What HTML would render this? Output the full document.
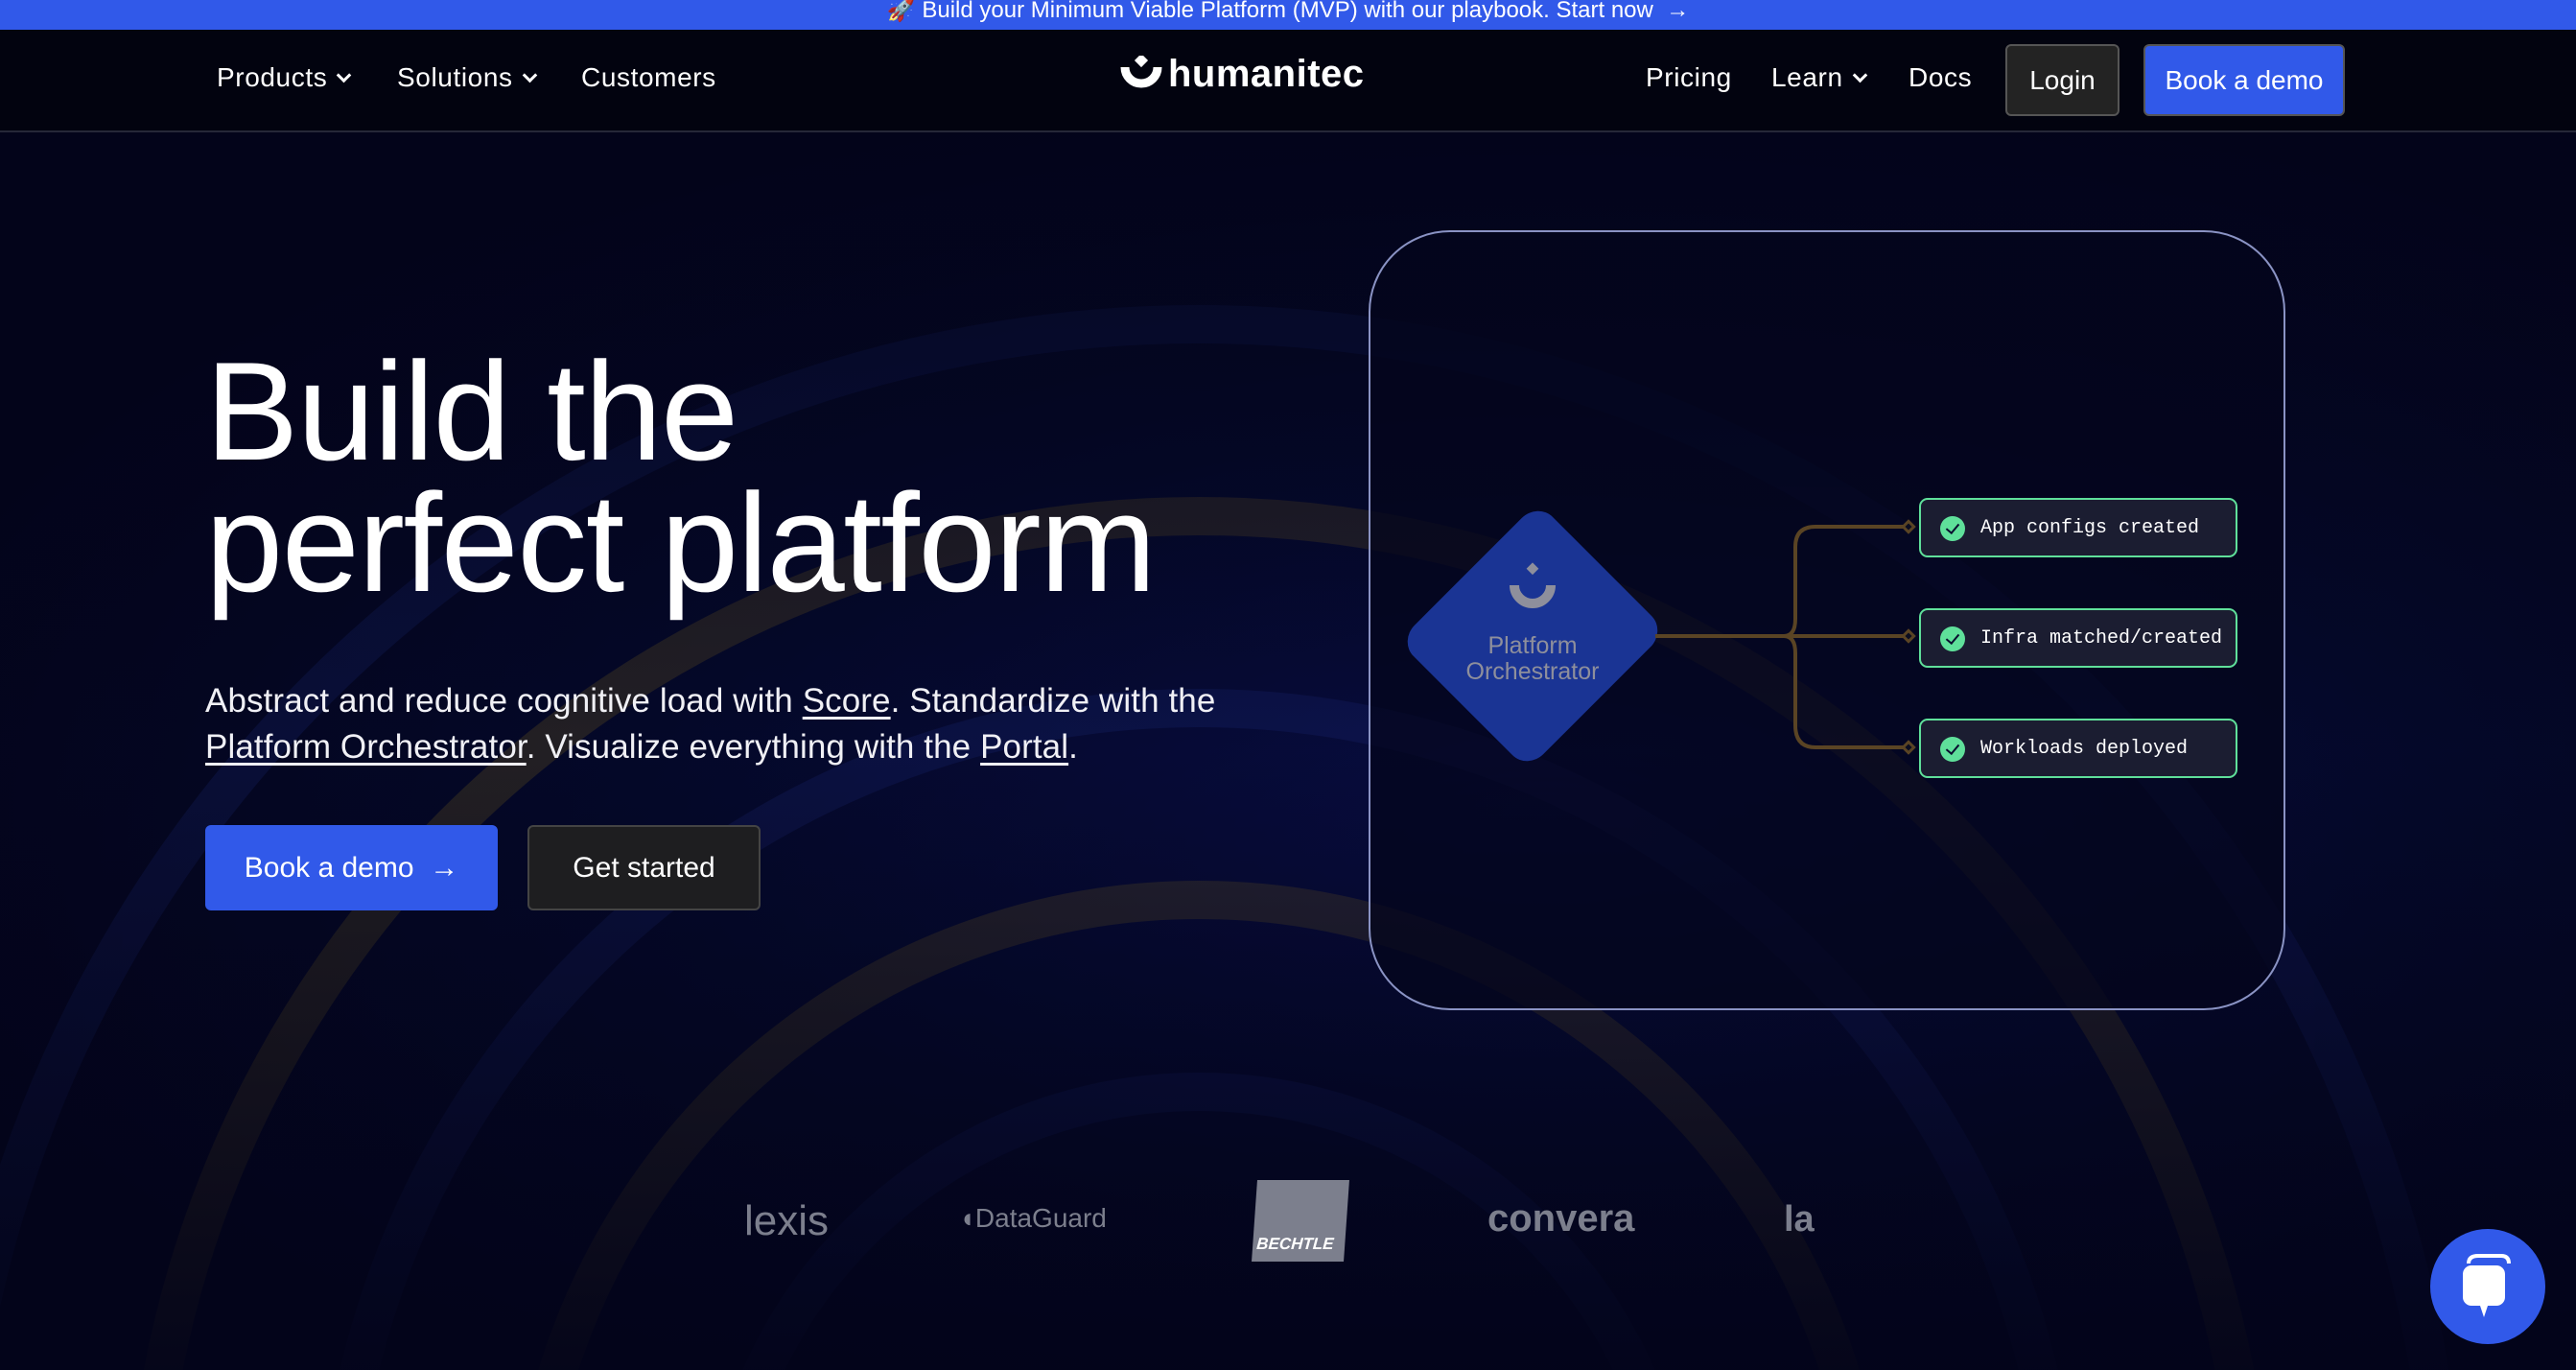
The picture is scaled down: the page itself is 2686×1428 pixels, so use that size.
<!DOCTYPE html>
<html><head><meta charset="utf-8"><style>
*{margin:0;padding:0;box-sizing:border-box}
html,body{width:2686px;height:1428px;overflow:hidden}
body{background:#03041a;font-family:"Liberation Sans",sans-serif;color:#fff;position:relative}
.banner{position:absolute;left:0;top:0;width:2686px;height:31px;background:#3159e9;text-align:center;font-size:24px;line-height:22px;color:#fff;overflow:hidden}
.nav{position:absolute;top:31px;left:0;width:2686px;height:107px;background:#02030f;border-bottom:2px solid #262838}
.nav a{position:absolute;top:34px;font-size:28px;color:#fff;letter-spacing:.6px}
.chev{display:inline-block;width:11px;height:11px;border-right:3px solid #fff;border-bottom:3px solid #fff;transform:rotate(45deg);margin-left:12px;position:relative;top:-6px}
.btn{position:absolute;border-radius:6px;font-size:28px;display:flex;align-items:center;justify-content:center}
.bg{position:absolute;left:0;top:138px;width:2686px;height:1290px;overflow:hidden;background:radial-gradient(ellipse at 60% 55%,#0a1050 0%,#050a30 40%,#03041a 80%)}
h1{position:absolute;left:214px;top:360px;font-size:146px;line-height:137px;font-weight:400;letter-spacing:-1.5px}
p.sub{position:absolute;left:214px;top:707px;font-size:35px;line-height:48px;color:#f0f0f5;letter-spacing:.1px}
p.sub u{text-underline-offset:5px}
.card{position:absolute;left:1427px;top:240px;width:956px;height:813px;border:2px solid #8a93c4;border-radius:85px;background:rgba(4,6,28,.75)}
.box{position:absolute;left:2001px;width:332px;height:62px;border:2px solid #5fe09a;border-radius:9px;background:#1b1d31;font-family:"Liberation Mono",monospace;font-size:20px;color:#fff;display:flex;align-items:center;padding-left:62px}
.box i{position:absolute;left:20px;top:17px;width:26px;height:26px;border-radius:50%;background:#5fe09a}
.box i:after{content:"";position:absolute;left:9px;top:5px;width:6px;height:11px;border-right:2px solid #0a0f30;border-bottom:2px solid #0a0f30;transform:rotate(40deg)}
.logo{position:absolute;color:#7c7f8d;font-weight:700}
</style></head><body>
<div class="bg">
<svg width="2686" height="1290" style="position:absolute;left:0;top:0">
<g fill="none" stroke-width="40" opacity=".22">
<circle cx="1250" cy="1500" r="700" stroke="#c9a21a"/>
<circle cx="1250" cy="1500" r="900" stroke="#2a3fae"/>
<circle cx="1250" cy="1500" r="1100" stroke="#c9a21a"/>
<circle cx="1250" cy="1500" r="500" stroke="#2a3fae"/>
<circle cx="1250" cy="1500" r="1300" stroke="#2a3fae"/>
</g>
<rect x="0" y="0" width="2686" height="1290" fill="url(#fade)"/>
<defs><linearGradient id="fade" x1="0" y1="0" x2="0" y2="1"><stop offset="0" stop-color="#03041a" stop-opacity=".8"/><stop offset=".5" stop-color="#03041a" stop-opacity=".3"/><stop offset="1" stop-color="#03041a" stop-opacity=".95"/></linearGradient></defs>
</svg>
</div>
<div class="banner">🚀 Build your Minimum Viable Platform (MVP) with our playbook. Start now &nbsp;→</div>
<div class="nav">
<a style="left:226px">Products<span class="chev"></span></a>
<a style="left:414px">Solutions<span class="chev"></span></a>
<a style="left:606px">Customers</a>
<div style="position:absolute;left:1168px;top:24px;font-size:40px;font-weight:700;letter-spacing:.5px"><svg width="44" height="36" viewBox="0 0 44 36" style="vertical-align:-4px;margin-right:6px"><path d="M5 12 A17 17 0 0 0 39 12" stroke="#fff" stroke-width="9" fill="none"/><rect x="17" y="0" width="10" height="10" fill="#fff" transform="rotate(45 22 5)"/></svg>humanitec</div>
<a style="left:1716px">Pricing</a>
<a style="left:1847px">Learn<span class="chev"></span></a>
<a style="left:1990px">Docs</a>
<div class="btn" style="left:2091px;top:15px;width:119px;height:75px;background:#232323;border:2px solid #555">Login</div>
<div class="btn" style="left:2235px;top:15px;width:210px;height:75px;background:#3159e9;border:2px solid #555">Book a demo</div>
</div>
<h1>Build the<br>perfect platform</h1>
<p class="sub">Abstract and reduce cognitive load with <u>Score</u>. Standardize with the<br><u>Platform Orchestrator</u>. Visualize everything with the <u>Portal</u>.</p>
<div class="btn" style="left:214px;top:860px;width:305px;height:89px;background:#3159e9;font-size:30px">Book a demo &nbsp;→</div>
<div class="btn" style="left:550px;top:860px;width:243px;height:89px;background:#1e1e20;border:2px solid #444;font-size:30px">Get started</div>
<div class="card"></div>
<svg width="2686" height="1428" style="position:absolute;left:0;top:0">
<rect x="1503" y="568" width="190" height="190" rx="22" fill="#1a3494" style="transform-origin:1598px 663px;transform:rotate(45deg) scaleY(1.08)"/>
<path d="M1726 663 H1860 M1860 663 Q1872 663 1872 645 V570 Q1872 549 1893 549 H1990 M1860 663 H1990 M1860 663 Q1872 663 1872 681 V756 Q1872 779 1893 779 H1990" stroke="#5a4424" stroke-width="4" fill="none"/>
<g fill="#0a0c20" stroke="#5a4424" stroke-width="3"><rect x="1986" y="545" width="8" height="8" transform="rotate(45 1990 549)"/><rect x="1986" y="659" width="8" height="8" transform="rotate(45 1990 663)"/><rect x="1986" y="775" width="8" height="8" transform="rotate(45 1990 779)"/></g>
<path d="M1579 610 A19 19 0 0 0 1617 610" stroke="#8e8f9c" stroke-width="10" fill="none"/>
<rect x="1594" y="588" width="9" height="9" fill="#8e8f9c" transform="rotate(45 1598 592)"/>
<text x="1598" y="681" fill="#8e8f9c" font-size="25" text-anchor="middle" font-family="Liberation Sans">Platform</text>
<text x="1598" y="708" fill="#8e8f9c" font-size="25" text-anchor="middle" font-family="Liberation Sans">Orchestrator</text>
</svg>
<div class="box" style="top:519px"><i></i>App configs created</div>
<div class="box" style="top:634px"><i></i>Infra matched/created</div>
<div class="box" style="top:749px"><i></i>Workloads deployed</div>
<div class="logo" style="left:776px;top:1248px;font-size:44px;font-weight:400">lexis</div>
<div class="logo" style="left:1000px;top:1254px;font-size:28px;font-weight:400">◖DataGuard</div>
<div style="position:absolute;left:1308px;top:1230px;width:96px;height:85px;background:#7c7f8d;transform:skewX(-4deg)"><span style="position:absolute;bottom:8px;left:4px;font-size:17px;font-weight:700;font-style:italic;color:#fff">BECHTLE</span></div>
<div class="logo" style="left:1551px;top:1248px;font-size:40px">convera</div>
<div class="logo" style="left:1860px;top:1250px;font-size:38px">la</div>
<div style="position:absolute;left:2534px;top:1281px;width:120px;height:120px;border-radius:50%;background:#3159e9">
<svg width="120" height="120" viewBox="0 0 120 120" style="position:absolute;left:0;top:0"><path d="M40 36 Q40 28 50 28 H74 Q82 28 82 36" stroke="#fff" stroke-width="4" fill="none"/><rect x="34" y="38" width="44" height="42" rx="9" fill="#fff"/><path d="M52 80 L56 92 L60 80Z" fill="#fff"/></svg></div>
</body></html>
